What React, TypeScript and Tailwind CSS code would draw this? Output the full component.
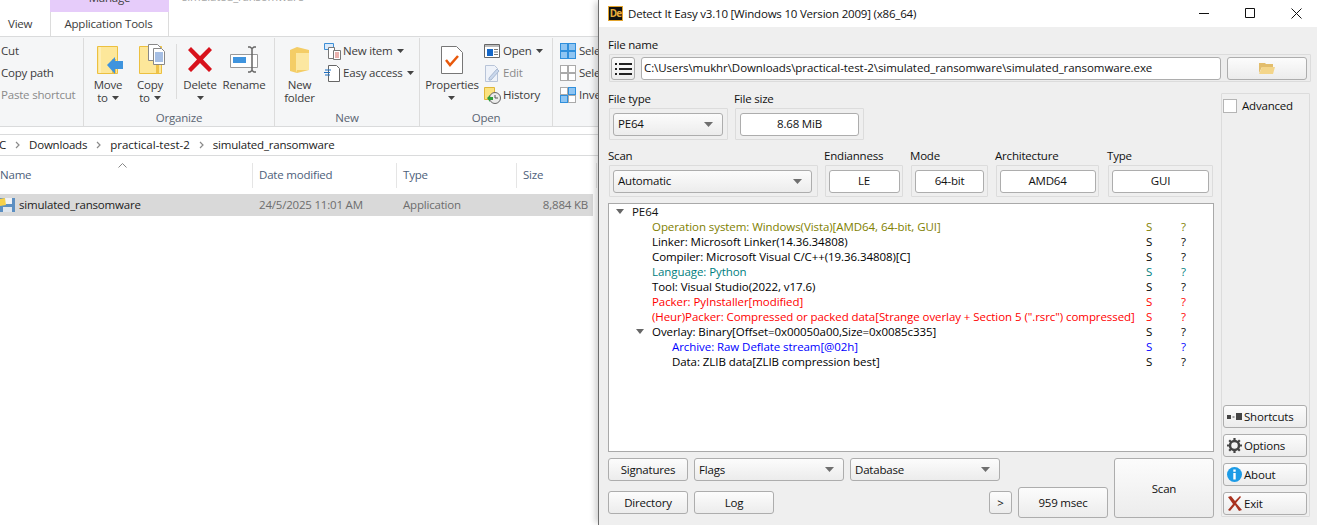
import React from "react";

const caret = (
  <svg width="7" height="4" viewBox="0 0 7 4" className="shrink-0">
    <path d="M0 0h7L3.5 4z" fill="#444" />
  </svg>
);

function MoveIcon() {
  return (
    <svg width="26" height="28" viewBox="0 0 26 28">
      <path d="M.5.5h20v27H.5z" fill="#fde79a" stroke="#ecc040" />
      <path d="M3 1v26" stroke="#feeeb5" strokeWidth="2" />
      <path d="M17 13v14" stroke="#eec24a" strokeWidth="4" />
      <path d="M10 19l8-8v4h8v8h-8v5z" fill="#3f94de" />
    </svg>
  );
}

function CopyIcon() {
  return (
    <svg width="26" height="30" viewBox="0 0 26 30">
      <path d="M.5 2.500h22v27H.5z" fill="#fde79a" stroke="#ecc040" />
      <path d="M18.500 20v9" stroke="#eec24a" strokeWidth="3" />
      <path d="M9.500.5h9l3 3v13h-12z" fill="#fff" stroke="#888" />
      <path d="M14.500 4.500h8l3 3v13h-11z" fill="#fff" stroke="#888" />
      <path d="M16 9h8M16 11h8M16 13h8M16 15h8M16 17h8" stroke="#4c7fc9" />
    </svg>
  );
}

function NewFolderIcon() {
  return (
    <svg width="20" height="27" viewBox="0 0 20 27">
      <path d="M0 3l7-3 12 3v20l-12 3-7-2z" fill="#f4cd66" />
      <path d="M6 6h13v17H7l-1 3z" fill="#fce7a1" />
    </svg>
  );
}

function SmallIcon({ kind }: { kind: string }) {
  if (kind === "newitem")
    return (
      <svg width="17" height="17" viewBox="0 0 17 17">
        <path d="M.5.5h9v6h-9z" fill="#dbeafa" stroke="#3d8fd6" />
        <path d="M4.500 4.500h6v11h-6z" fill="#fff" stroke="#777" />
        <path d="M9.500 7.500h7v9h-7z" fill="#fff" stroke="#777" />
        <path d="M11 10h4M11 12h4M11 14h4" stroke="#d4655c" />
      </svg>
    );
  if (kind === "easy")
    return (
      <svg width="17" height="17" viewBox="0 0 17 17">
        <path d="M4.500.5h8l3 3v13h-11z" fill="#fff" stroke="#666" />
        <path d="M1 5h6M0 7.500h6M1 10h5" stroke="#1f6fc0" strokeWidth="1.200" />
      </svg>
    );
  if (kind === "open")
    return (
      <svg width="16" height="14" viewBox="0 0 16 14">
        <path d="M.5.5h15v13H.5z" fill="#fff" stroke="#666" />
        <path d="M1 1h14v2H1z" fill="#bbb" />
        <path d="M3 5h6v7H3z" fill="#1467c8" />
        <path d="M10 5.500h4M10 8h4M10 10.500h4" stroke="#777" />
      </svg>
    );
  if (kind === "edit")
    return (
      <svg width="16" height="17" viewBox="0 0 16 17">
        <path d="M1.500.5h9l3 3v13h-12z" fill="#eef2f9" stroke="#b8c4d8" />
        <path d="M5 13l8-9 2 2-8 9H5z" fill="#c9d7ec" stroke="#a8b8d0" />
      </svg>
    );
  if (kind === "history")
    return (
      <svg width="17" height="17" viewBox="0 0 17 17">
        <path d="M.5.5h10v12H.5z" fill="#fbe27f" stroke="#e0b73a" />
        <circle cx="11" cy="11" r="5.500" fill="#ececec" stroke="#666" />
        <path d="M11 8v3h3" stroke="#555" fill="none" />
        <path d="M3 11l3-3v2h3v3H6v2z" fill="#2f9e3a" />
      </svg>
    );
  const cell = (filled: boolean, x: number, y: number) => (
    <rect
      key={`${x}-${y}`}
      x={x + 0.5}
      y={y + 0.5}
      width="7"
      height="7"
      fill={filled ? "#8fc5f2" : "#fff"}
      stroke={filled ? "#2f8fdc" : "#aaa"}
    />
  );
  return (
    <svg width="16" height="16" viewBox="0 0 16 16">
      {cell(kind === "all", 0, 0)}
      {cell(kind === "all" || kind === "invert", 8, 0)}
      {cell(kind === "all" || kind === "invert", 0, 8)}
      {cell(kind === "all", 8, 8)}
    </svg>
  );
}

function Large({
  w,
  icon,
  lines,
  arrow,
}: {
  w: number;
  icon: React.ReactNode;
  lines: string[];
  arrow?: "inline" | "below";
}) {
  return (
    <div className="flex flex-col items-center shrink-0" style={{ width: w }}>
      <div className="h-[30px] flex items-end justify-center">{icon}</div>
      <div className="mt-[4px] text-center leading-[13px]">
        {lines.map((l, i) => (
          <div key={l} className="flex items-center justify-center gap-1 whitespace-nowrap">
            {l}
            {arrow === "inline" && i === lines.length - 1 && caret}
          </div>
        ))}
        {arrow === "below" && <div className="flex justify-center h-[13px] items-center">{caret}</div>}
      </div>
    </div>
  );
}

function SmallRow({
  icon,
  text,
  arrow,
  muted,
}: {
  icon?: React.ReactNode;
  text: string;
  arrow?: boolean;
  muted?: boolean;
}) {
  return (
    <div className={`h-[22px] flex items-center whitespace-nowrap ${muted ? "text-[#8a8a8a]" : ""}`}>
      {icon && <div className="w-[19px] shrink-0 flex items-center">{icon}</div>}
      <span>{text}</span>
      {arrow && <span className="ml-[4px]">{caret}</span>}
    </div>
  );
}

function Group({ w, label, children }: { w: number; label: string; children: React.ReactNode }) {
  return (
    <div className="shrink-0 flex flex-col border-r border-[#dcdcdc] h-[88px]" style={{ width: w }}>
      <div className="h-[72px] flex">{children}</div>
      <div className="text-center leading-[16px] text-[#5a6472]">{label}</div>
    </div>
  );
}

function Chevron() {
  return (
    <svg width="5" height="8" viewBox="0 0 5 8" className="mx-[9px] shrink-0">
      <path d="M1 1l3 3-3 3" fill="none" stroke="#8a8a8a" strokeWidth="1.200" />
    </svg>
  );
}

function Column({ w, pad, label }: { w: number; pad: number; label: string }) {
  return (
    <div className="shrink-0 flex h-full" style={{ width: w }}>
      <div className="flex-1 pt-[11px] leading-[16px] whitespace-nowrap" style={{ paddingLeft: pad }}>
        {label}
      </div>
      <div className="w-px h-[25px] mt-[7px] bg-[#e5e5e5]" />
    </div>
  );
}

function Explorer() {
  return (
    <div className="w-[598px] shrink-0 h-full bg-white overflow-hidden text-[#3c3c3c] flex flex-col">
      <div className="h-[12px] flex overflow-hidden">
        <div className="ml-[50px] w-[119px] bg-[#e6ccfa] text-center leading-[12px] h-[12px]">
          <div className="-translate-y-[8px]">Manage</div>
        </div>
        <div className="ml-[13px] text-[#a5a5a5] leading-[12px] -translate-y-[9px]">simulated_ransomware</div>
      </div>
      <div className="h-[24px] flex items-center">
        <div className="w-[50px] pl-2">View</div>
        <div className="w-[119px] h-full flex items-center justify-center border-x border-[#dcdcdc] pr-[2px]">
          Application Tools
        </div>
      </div>
      <div className="h-[91px] bg-[#f5f6f7] border-y border-[#dadbdc] flex pt-px">
        <Group w={84} label="">
          <div className="pt-[2px] pl-px">
            <SmallRow text="Cut" />
            <SmallRow text="Copy path" />
            <SmallRow text="Paste shortcut" muted />
          </div>
        </Group>
        <Group w={191} label="Organize">
          <div className="flex pt-[6px] pl-[3px]">
            <Large w={42} icon={<span className="block ml-[3px]"><MoveIcon /></span>} lines={["Move", "to"]} arrow="inline" />
            <Large w={42} icon={<span className="block ml-[3px]"><CopyIcon /></span>} lines={["Copy", "to"]} arrow="inline" />
            <div className="w-px h-[55px] bg-[#dcdcdc] ml-[5px] mr-[3px]" />
            <Large
              w={40}
              icon={
                <svg width="26" height="27" viewBox="0 0 26 27" className="mb-px">
                  <path d="M4 1l9 9 9-9 3 3-9 9.500 9 9.500-3 3-9-9-9 9-3-3 9-9.500-9-9.500z" fill="#d8121c" />
                </svg>
              }
              lines={["Delete"]}
              arrow="below"
            />
            <Large
              w={48}
              icon={
                <svg width="28" height="27" viewBox="0 0 28 27" className="mb-px">
                  <path d="M.5 8.500h27v13H.5z" fill="#fff" stroke="#999" />
                  <path d="M3 11h13v6H3z" fill="#3f94de" />
                  <path d="M18 1h2l2 1.500L24 1h2M22 2v23M18 26h2l2-1.500 2 1.500h2" stroke="#666" strokeWidth="1.500" fill="none" />
                </svg>
              }
              lines={["Rename"]}
            />
          </div>
        </Group>
        <Group w={145} label="New">
          <div className="flex pt-[6px]">
            <Large w={49} icon={<NewFolderIcon />} lines={["New", "folder"]} />
            <div className="-mt-[6px] pt-[2px]">
              <SmallRow icon={<SmallIcon kind="newitem" />} text="New item" arrow />
              <SmallRow icon={<SmallIcon kind="easy" />} text="Easy access" arrow />
            </div>
          </div>
        </Group>
        <Group w={133} label="Open">
          <div className="flex pt-[6px]">
            <Large
              w={64}
              icon={
                <svg width="22" height="28" viewBox="0 0 22 28">
                  <path d="M.5.5h15l6 6v21H.5z" fill="#fff" stroke="#777" />
                  <path d="M5 14l4 5 8-9" stroke="#e8590c" strokeWidth="2.500" fill="none" />
                </svg>
              }
              lines={["Properties"]}
              arrow="below"
            />
            <div className="-mt-[6px] pt-[2px]">
              <SmallRow icon={<SmallIcon kind="open" />} text="Open" arrow />
              <SmallRow icon={<SmallIcon kind="edit" />} text="Edit" muted />
              <SmallRow icon={<SmallIcon kind="history" />} text="History" />
            </div>
          </div>
        </Group>
        <div className="pl-[7px] pt-[2px] w-[46px] overflow-hidden shrink-0">
          <SmallRow icon={<SmallIcon kind="all" />} text="Select all" />
          <SmallRow icon={<SmallIcon kind="none" />} text="Select none" />
          <SmallRow icon={<SmallIcon kind="invert" />} text="Invert selection" />
        </div>
      </div>
      <div className="h-[7px]" />
      <div className="h-[22px] border-y border-[#dadbdc] flex items-center whitespace-nowrap text-[#222] -ml-px">
        <span>C</span>
        <Chevron />
        <span>Downloads</span>
        <Chevron />
        <span className="tracking-normal">practical-test-2</span>
        <Chevron />
        <span>simulated_ransomware</span>
      </div>
      <div className="h-[38px] flex text-[#4c607a] relative">
        <svg width="9" height="5" viewBox="0 0 9 5" className="absolute left-[118px] top-[7px]">
          <path d="M.5 4.500l4-4 4 4" fill="none" stroke="#888" />
        </svg>
        <Column w={253} pad={0} label="Name" />
        <Column w={144} pad={6} label="Date modified" />
        <Column w={120} pad={6} label="Type" />
        <Column w={80} pad={6} label="Size" />
      </div>
      <div className="h-[22px] w-[593px] bg-[#d9d9d9] flex items-center text-[#6d6d6d]">
        <div className="w-[252px] flex items-center gap-[3px] text-[#222]">
          <svg width="16" height="16" viewBox="0 0 16 16" className="shrink-0">
            <path d="M0 1h15v14H0z" fill="#5c8fc2" />
            <path d="M5 1h7v6H5z" fill="#f1f3f6" />
            <path d="M0 2l5-1 1 7-6 1z" fill="#f7d14a" />
            <path d="M3 10h9v5H3z" fill="#dfe6ee" />
          </svg>
          simulated_ransomware
        </div>
        <div className="w-[144px] pl-[7px]">24/5/2025 11:01 AM</div>
        <div className="w-[113px] pl-[7px]">Application</div>
        <div className="flex-1 text-right pr-[5px]">8,884 KB</div>
      </div>
    </div>
  );
}

const btn =
  "h-[23px] rounded-[3px] border border-[#adadad] bg-linear-to-b from-[#fcfcfc] to-[#ececec] flex items-center shrink-0";
const field = "h-[23px] rounded-[3px] border border-[#adadad] bg-white flex items-center justify-center shrink-0";
const frame = "border border-[#dcdcdc] rounded-[1px]";
const label = "h-[18px] leading-[18px] whitespace-nowrap";

function Combo({ w, text }: { w: number; text: string }) {
  return (
    <div className={`${btn} justify-between pl-[4px] pr-[9px]`} style={{ width: w }}>
      <span>{text}</span>
      <svg width="9" height="5" viewBox="0 0 9 5">
        <path d="M0 0h9L4.500 5z" fill="#6f6f6f" />
      </svg>
    </div>
  );
}

function Button({ w, text }: { w: number; text: string }) {
  return (
    <div className={`${btn} justify-center`} style={{ width: w }}>
      {text}
    </div>
  );
}

function Info({ title, value, w, valueW, gap }: { title: string; value: string; w: number; valueW: number; gap: number }) {
  return (
    <div className="shrink-0" style={{ width: w, marginLeft: gap }}>
      <div className={label}>{title}</div>
      <div className={`${frame} h-[32px] ml-px flex items-center justify-center`}>
        <div className={field} style={{ width: valueW }}>
          {value}
        </div>
      </div>
    </div>
  );
}

function ComboBlock({ title, w, comboW, text }: { title: string; w: number; comboW: number; text: string }) {
  return (
    <div className="shrink-0" style={{ width: w }}>
      <div className={label}>{title}</div>
      <div className={`${frame} h-[32px] ml-px flex items-center pl-[3px]`}>
        <Combo w={comboW} text={text} />
      </div>
    </div>
  );
}

const rows = [
  { text: "Operation system: Windows(Vista)[AMD64, 64-bit, GUI]", color: "text-[#808000]", depth: 2 },
  { text: "Linker: Microsoft Linker(14.36.34808)", color: "text-black", depth: 2 },
  { text: "Compiler: Microsoft Visual C/C++(19.36.34808)[C]", color: "text-black", depth: 2 },
  { text: "Language: Python", color: "text-[#008080]", depth: 2 },
  { text: "Tool: Visual Studio(2022, v17.6)", color: "text-black", depth: 2 },
  { text: "Packer: PyInstaller[modified]", color: "text-[#ff0000]", depth: 2 },
  {
    text: '(Heur)Packer: Compressed or packed data[Strange overlay + Section 5 (".rsrc") compressed]',
    color: "text-[#ff0000]",
    depth: 2,
  },
  { text: "Overlay: Binary[Offset=0x00050a00,Size=0x0085c335]", color: "text-black", depth: 2, open: true },
  { text: "Archive: Raw Deflate stream[@02h]", color: "text-[#0000ff]", depth: 3 },
  { text: "Data: ZLIB data[ZLIB compression best]", color: "text-black", depth: 3 },
];

function TreeArrow() {
  return (
    <svg width="8" height="5" viewBox="0 0 8 5" className="absolute -left-[16px] top-[5px]">
      <path d="M0 0h8L4 5z" fill="#666" />
    </svg>
  );
}

function Tree() {
  return (
    <div className="w-[606px] h-[249px] mt-[6px] bg-white border border-[#a9a9a9] tracking-[-0.07px]">
      <div className="h-[15px] leading-[15px] pl-[23px] flex">
        <span className="relative">
          <TreeArrow />
          PE64
        </span>
      </div>
      {rows.map((r) => (
        <div
          key={r.text}
          className={`h-[15px] leading-[15px] flex whitespace-nowrap ${r.color} ${r.depth === 3 ? "pl-[63px]" : "pl-[43px]"}`}
        >
          <span className={`relative shrink-0 ${r.depth === 3 ? "w-[474px]" : "w-[494px]"}`}>
            {r.open && <TreeArrow />}
            {r.text}
          </span>
          <span className="w-[35px] shrink-0">S</span>
          <span>?</span>
        </div>
      ))}
    </div>
  );
}

function SideButton({ icon, text }: { icon: React.ReactNode; text: string }) {
  return (
    <div className={`${btn} w-[84px] pl-[3px] gap-[2px]`}>
      <span className="w-[15px] h-[15px] flex items-center justify-center shrink-0">{icon}</span>
      {text}
    </div>
  );
}

function SidePanel() {
  return (
    <div className={`${frame} w-[89px] h-[424px] mt-[3px] ml-[7px] shrink-0 flex flex-col px-px`}>
      <div className="flex items-center gap-[5px] h-[22px] mt-px">
        <div className="w-[14px] h-[14px] bg-white border border-[#b5b5b5]" />
        Advanced
      </div>
      <div className="mt-auto mb-px flex flex-col gap-[6px]">
        <SideButton
          text="Shortcuts"
          icon={
            <svg width="15" height="8" viewBox="0 0 15 8">
              <path d="M0 2h4v4H0zM5.500 3.500h2v1h-2zM9 0h6v7H9z" fill="#444" />
            </svg>
          }
        />
        <SideButton
          text="Options"
          icon={
            <svg width="15" height="15" viewBox="0 0 15 15">
              <circle cx="7.500" cy="7.500" r="4.500" fill="none" stroke="#444" strokeWidth="2.500" />
              <path
                d="M7.500 0v3M7.500 12v3M0 7.500h3M12 7.500h3M2.200 2.200l2 2M10.800 10.800l2 2M2.200 12.800l2-2M10.800 4.200l2-2"
                stroke="#444"
                strokeWidth="2.200"
              />
            </svg>
          }
        />
        <SideButton
          text="About"
          icon={
            <svg width="15" height="15" viewBox="0 0 15 15">
              <circle cx="7.500" cy="7.500" r="7.500" fill="#1c9be6" />
              <path d="M6.300 2.500h2.400v2.200H6.300zM6.300 6h2.400v6.500H6.300z" fill="#fff" />
            </svg>
          }
        />
        <SideButton
          text="Exit"
          icon={
            <svg width="15" height="15" viewBox="0 0 15 15">
              <path d="M1 1l3-1 4 5 5-5 1 1-5 6 6 7-3 1-4-6-5 6-2-1 5-6z" fill="#a8321f" />
            </svg>
          }
        />
      </div>
    </div>
  );
}

function DetectItEasy() {
  return (
    <div className="flex-1 h-full border-l border-[#6e6e6e] flex flex-col text-[#111] shadow-[-5px_0_6px_-2px_rgba(0,0,0,0.18)] z-10">
      <div className="h-[27px] bg-white flex items-center shrink-0">
        <div className="ml-[9px] w-[15px] h-[15px] bg-[#111] border border-[#e3a52e] flex items-center justify-center text-[10px] font-bold text-[#e8ad3a] tracking-[-1px] overflow-hidden">
          De
        </div>
        <span className="ml-[5px] whitespace-nowrap">Detect It Easy v3.10 [Windows 10 Version 2009] (x86_64)</span>
        <div className="ml-auto flex items-center mr-[15px] gap-[35px]">
          <svg width="11" height="11" viewBox="0 0 11 11">
            <path d="M0 5.500h10" stroke="#111" />
          </svg>
          <svg width="11" height="11" viewBox="0 0 11 11">
            <path d="M.5.500h9v9h-9z" stroke="#111" fill="none" />
          </svg>
          <svg width="11" height="11" viewBox="0 0 11 11">
            <path d="M.5.500l10 10M10.500.500l-10 10" stroke="#111" fill="none" />
          </svg>
        </div>
      </div>
      <div className="flex-1 bg-[#efefef] pl-[9px]">
        <div className="h-[17px] leading-[17px] mt-[9px] whitespace-nowrap">File name</div>
        <div className={`${frame} w-[702px] h-[28px] mt-px ml-px flex items-center pl-px bg-[#ededed]`}>
          <div className={`${btn} w-[24px] justify-center`}>
            <svg width="17" height="13" viewBox="0 0 17 13">
              <path d="M0 1h2v2H0zM4 1h13v2H4zM0 6h2v2H0zM4 6h13v2H4zM0 11h2v2H0zM4 11h13v2H4z" fill="#222" />
            </svg>
          </div>
          <div className={`${field} w-[580px] ml-[6px] !justify-start pl-[2px] tracking-[-0.07px] whitespace-nowrap`}>
            C:\Users\mukhr\Downloads\practical-test-2\simulated_ransomware\simulated_ransomware.exe
          </div>
          <div className={`${btn} w-[80px] ml-[6px] justify-center`}>
            <svg width="16" height="12" viewBox="0 0 16 12">
              <path d="M0 1h6l1 1h7v3H3L0 11z" fill="#e2bd6c" />
              <path d="M3 5h13l-2 7H0z" fill="#f3d58a" />
            </svg>
          </div>
        </div>
        <div className="flex mt-[8px]">
          <div className="w-[606px] shrink-0">
            <div className="flex">
              <ComboBlock title="File type" w={120} comboW={110} text="PE64" />
              <Info title="File size" value="8.68 MiB" w={130} valueW={119} gap={6} />
            </div>
            <div className="flex mt-[7px]">
              <ComboBlock title="Scan" w={210} comboW={199} text="Automatic" />
              <Info title="Endianness" value="LE" w={79} valueW={71} gap={6} />
              <Info title="Mode" value="64-bit" w={78} valueW={69} gap={7} />
              <Info title="Architecture" value="AMD64" w={104} valueW={96} gap={7} />
              <Info title="Type" value="GUI" w={106} valueW={97} gap={8} />
            </div>
            <Tree />
            <div className="flex mt-[6px]">
              <div className="w-[500px] shrink-0">
                <div className="flex gap-[6px]">
                  <Button w={80} text="Signatures" />
                  <Combo w={150} text="Flags" />
                  <Combo w={150} text="Database" />
                </div>
                <div className="flex items-center mt-[6px] h-[31px]">
                  <Button w={80} text="Directory" />
                  <div className="ml-[6px]">
                    <Button w={80} text="Log" />
                  </div>
                  <div className="ml-auto">
                    <Button w={23} text=">" />
                  </div>
                  <div className={`${btn} !h-[31px] w-[90px] ml-[6px] justify-center`}>959 msec</div>
                </div>
              </div>
              <div className={`${btn} !h-[60px] w-[100px] ml-[6px] justify-center pt-px`}>Scan</div>
            </div>
          </div>
          <SidePanel />
        </div>
      </div>
    </div>
  );
}

export default function App() {
  return (
    <div className="w-[1317px] h-[525px] flex overflow-hidden font-['Open_Sans',sans-serif] text-[11.5px] tracking-[-0.2px]">
      <Explorer />
      <DetectItEasy />
    </div>
  );
}
